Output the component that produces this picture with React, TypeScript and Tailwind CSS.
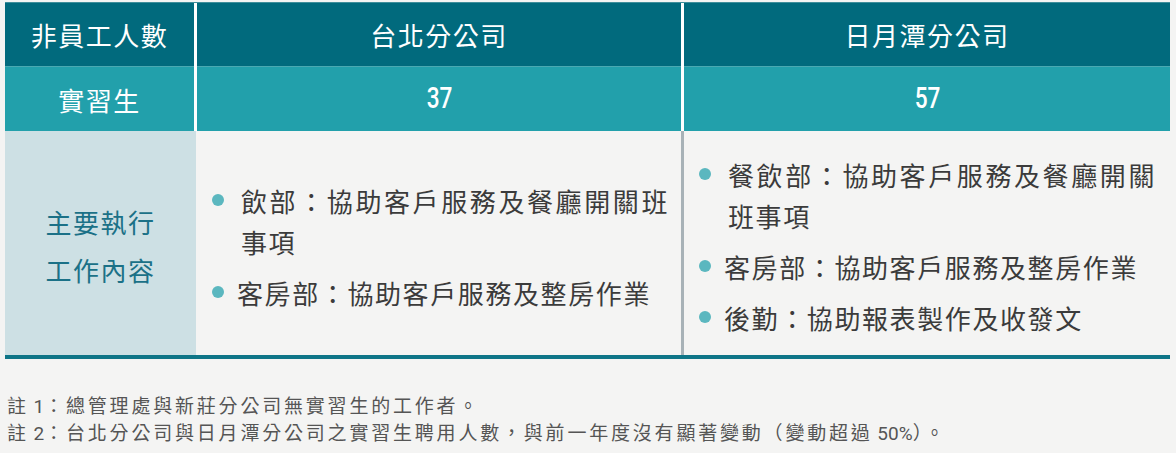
import React from "react";

const cjk = "font-['Noto_Sans_CJK_TC','Noto_Sans_CJK_SC',sans-serif]";
const num = "font-['Liberation_Sans_Narrow','Roboto','Noto_Sans_CJK_TC',sans-serif]";

const Bullet: React.FC = () => (
  <span className="mt-[14px] h-[12px] w-[12px] shrink-0 rounded-full bg-[#5bb7bf]" />
);

interface ItemProps {
  lines: string[];
  indent?: boolean;
}

// one bullet item; the first line of a wrapped item is stretched to the box edge
const Item: React.FC<ItemProps> = ({ lines, indent = false }) => (
  <li className="flex items-start gap-[13px]">
    <Bullet />
    <div className={`flex-1 ${indent ? "pl-[4px]" : ""}`}>
      {lines.map((l, i) => (
        <div
          key={i}
          className={
            i === 0 && lines.length > 1
              ? "text-justify [text-align-last:justify]"
              : ""
          }
        >
          {l}
        </div>
      ))}
    </div>
  </li>
);

const Count: React.FC<{ value: string }> = ({ value }) => (
  <div className="flex h-[65px] items-center justify-center border-t border-[#4aa9b2] bg-[#22a0ab] text-white">
    <span className={`inline-block scale-x-[0.78] text-[29px] font-medium ${num}`}>
      {value}
    </span>
  </div>
);

export default function App() {
  return (
    <div className={`min-h-[453px] bg-[#f4f4f3] px-[5px] pt-[2px] ${cjk}`}>
      <div className="w-[1165px] bg-white">
        {/* header row */}
        <div className="grid grid-cols-[189px_484px_486px] gap-x-[3px] border-t border-[#3f8e9b]">
          <div className="flex h-[63px] items-center justify-center bg-[#016a7d] text-[26px] tracking-[1.5px] text-white">
            非員工人數
          </div>
          <div className="flex h-[63px] items-center justify-center bg-[#016a7d] text-[26px] tracking-[1.5px] text-white">
            台北分公司
          </div>
          <div className="flex h-[63px] items-center justify-center bg-[#016a7d] text-[26px] tracking-[1.5px] text-white">
            日月潭分公司
          </div>
        </div>

        {/* intern count row */}
        <div className="grid grid-cols-[189px_484px_486px] gap-x-[3px]">
          <div className="flex h-[65px] items-center justify-center border-t border-[#4aa9b2] bg-[#22a0ab] text-[26px] tracking-[1.5px] text-white">
            實習生
          </div>
          <Count value="37" />
          <Count value="57" />
        </div>

        {/* duties row */}
        <div className="grid grid-cols-[191px_488px_486px] border-b-4 border-[#0e7587] bg-[#f4f4f3]">
          <div className="flex h-[224px] flex-col items-center justify-center bg-[#cde0e4] pt-[6px] text-[26px] leading-[48px] tracking-[1.5px] text-[#1b7187]">
            <div>主要執行</div>
            <div>工作內容</div>
          </div>
          <div className="flex h-[224px] items-center border-r-[3px] border-[#a8b2b7] pl-[16px] pr-[12px] pt-[6px]">
            <ul className="flex w-full flex-col gap-[10px] text-[26px] leading-[41px] tracking-[1.6px] text-[#3b3b3b]">
              <Item indent lines={["飲部：協助客戶服務及餐廳開關班", "事項"]} />
              <Item lines={["客房部：協助客戶服務及整房作業"]} />
            </ul>
          </div>
          <div className="flex h-[224px] items-center pl-[15px] pr-[14px] pt-[6px]">
            <ul className="flex w-full flex-col gap-[10px] text-[26px] leading-[41px] tracking-[1.6px] text-[#3b3b3b]">
              <Item indent lines={["餐飲部：協助客戶服務及餐廳開關", "班事項"]} />
              <Item lines={["客房部：協助客戶服務及整房作業"]} />
              <Item lines={["後勤：協助報表製作及收發文"]} />
            </ul>
          </div>
        </div>
      </div>

      {/* notes */}
      <div className="mt-[33px] pl-[2px] text-[19px] leading-[25px] tracking-[2.8px] text-[#555]">
        <p>
          註<span className={`${num} tracking-normal`}> 1</span>：總管理處與新莊分公司無實習生的工作者。
        </p>
        <p>
          註<span className={`${num} tracking-normal`}> 2</span>：台北分公司與日月潭分公司之實習生聘用人數，與前一年度沒有顯著變動（變動超過
          <span className={`${num} tracking-normal`}> 50%</span>）。
        </p>
      </div>
    </div>
  );
}
